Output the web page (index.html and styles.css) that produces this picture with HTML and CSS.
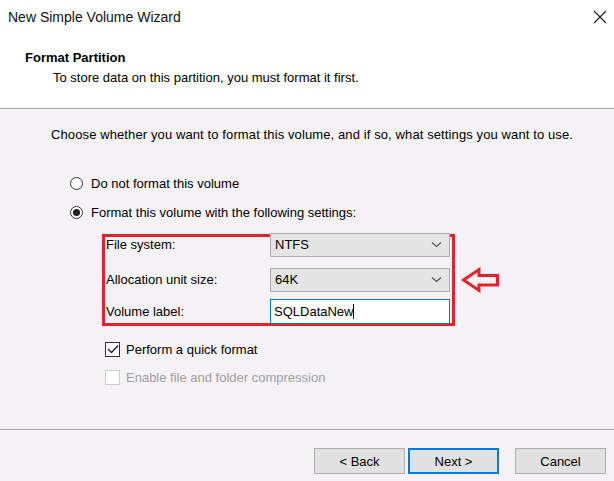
FILE: index.html
```html
<!DOCTYPE html>
<html>
<head>
<meta charset="utf-8">
<link rel="stylesheet" href="styles.css">
</head>
<body>
<div class="dialog">
  <div class="header">
    <div class="titlebar">
      <span class="title">New Simple Volume Wizard</span>
      <svg class="close" width="14" height="14" viewBox="0 0 14 14"><path d="M1 1 L13 13 M13 1 L1 13" stroke="#222" stroke-width="1.2" fill="none"/></svg>
    </div>
    <div class="heading">Format Partition</div>
    <div class="subheading">To store data on this partition, you must format it first.</div>
  </div>
  <div class="content">
    <div class="intro">Choose whether you want to format this volume, and if so, what settings you want to use.</div>
    <div class="radio-row first">
      <span class="radio"></span>
      <span>Do not format this volume</span>
    </div>
    <div class="radio-row">
      <span class="radio checked"><span class="dot"></span></span>
      <span>Format this volume with the following settings:</span>
    </div>
    <div class="settings-wrap">
      <div class="settings">
        <div class="field">
          <span class="label">File system:</span>
          <div class="combo"><span>NTFS</span><svg width="11" height="7" viewBox="0 0 11 7"><path d="M1 1.5 L5.5 5.5 L10 1.5" stroke="#555" stroke-width="1.3" fill="none"/></svg></div>
        </div>
        <div class="field second">
          <span class="label">Allocation unit size:</span>
          <div class="combo"><span>64K</span><svg width="11" height="7" viewBox="0 0 11 7"><path d="M1 1.5 L5.5 5.5 L10 1.5" stroke="#555" stroke-width="1.3" fill="none"/></svg></div>
        </div>
        <div class="field third">
          <span class="label">Volume label:</span>
          <div class="textbox"><span>SQLDataNew</span><span class="caret"></span></div>
        </div>
      </div>
      <svg class="arrow" width="40" height="28" viewBox="0 0 40 28"><path d="M2.5 14 L18 3.5 L18 9.5 L36.5 9.5 L36.5 19 L18 19 L18 24.5 Z" stroke="#e8202a" stroke-width="3" fill="none" stroke-linejoin="miter"/></svg>
    </div>
    <div class="check-row">
      <span class="check"><svg width="12" height="10" viewBox="0 0 12 10"><path d="M1 5 L4.5 8.5 L11 1.5" stroke="#222" stroke-width="1.4" fill="none"/></svg></span>
      <span>Perform a quick format</span>
    </div>
    <div class="check-row disabled">
      <span class="check"></span>
      <span>Enable file and folder compression</span>
    </div>
  </div>
  <div class="footer">
    <button class="btn">&lt; Back</button>
    <button class="btn primary">Next &gt;</button>
    <button class="btn cancel">Cancel</button>
  </div>
</div>
</body>
</html>
```

FILE: styles.css
```css
html, body {
  margin: 0;
  padding: 0;
}
body {
  width: 614px;
  height: 481px;
  overflow: hidden;
  background: #f5f2f5;
  font-family: "Liberation Sans", Arial, sans-serif;
  font-size: 13px;
  color: #000;
}
.dialog {
  display: flex;
  flex-direction: column;
  height: 481px;
}
.header {
  background: #fff;
  height: 109px;
  border-bottom: 1px solid #a8a8a8;
  box-sizing: border-box;
}
.titlebar {
  display: flex;
  justify-content: space-between;
  align-items: center;
  height: 34px;
  padding: 0 7px 0 8px;
}
.title {
  font-size: 14px;
  color: #111;
}
.heading {
  font-weight: bold;
  margin: 16px 0 0 25px;
  line-height: 16px;
}
.subheading {
  margin: 4px 0 0 53px;
  line-height: 16px;
}
.content {
  flex: 1;
  padding: 18px 0 0 51px;
}
.intro {
  line-height: 16px;
  letter-spacing: 0.11px;
}
.radio-row {
  display: flex;
  align-items: center;
  gap: 8px;
  margin-left: 19px;
  height: 16px;
  margin-top: 13px;
}
.radio-row.first {
  margin-top: 32px;
}
.radio {
  width: 11px;
  height: 11px;
  border: 1px solid #333;
  border-radius: 50%;
  background: #fff;
  display: flex;
  align-items: center;
  justify-content: center;
}
.radio .dot {
  width: 7px;
  height: 7px;
  border-radius: 50%;
  background: #222;
}
.settings-wrap {
  display: flex;
  align-items: center;
  margin: 14px 0 0 51px;
  gap: 6px;
}
.settings {
  width: 344px;
  height: 86px;
  border: 3px solid #e8202a;
  padding: 0 2px 0 1px;
}
.field {
  display: flex;
  align-items: center;
  height: 25px;
  margin-top: -5px;
}
.field.second {
  margin-top: 10px;
}
.field.third {
  margin-top: 7px;
}
.label {
  width: 164px;
}
.combo {
  width: 180px;
  height: 24px;
  background: #e5e5e5;
  border: 1px solid #adadad;
  display: flex;
  align-items: center;
  justify-content: space-between;
  padding: 0 7px 0 4px;
  box-sizing: border-box;
}
.textbox {
  width: 180px;
  height: 25px;
  background: #fff;
  border: 1px solid #0078d7;
  display: flex;
  align-items: center;
  padding: 0 3px;
  box-sizing: border-box;
}
.caret {
  width: 1px;
  height: 15px;
  background: #000;
}
.check-row {
  display: flex;
  align-items: center;
  gap: 6px;
  margin: 15px 0 0 54px;
  height: 16px;
}
.check-row.disabled {
  margin-top: 12px;
  color: #a0a0a0;
}
.check {
  width: 13px;
  height: 13px;
  border: 1px solid #333;
  background: #fff;
  display: flex;
  align-items: center;
  justify-content: center;
}
.disabled .check {
  border-color: #cccccc;
}
.footer {
  height: 52px;
  border-top: 1px solid #a0a0a0;
  box-shadow: inset 0 1px 0 #fff;
  display: flex;
  align-items: flex-start;
  padding: 18px 0 0 314px;
  gap: 3px;
  box-sizing: border-box;
}
.btn {
  width: 91px;
  height: 26px;
  background: #e1e1e1;
  border: 1px solid #adadad;
  font-family: "Liberation Sans", Arial, sans-serif;
  font-size: 13px;
  color: #000;
  padding: 0;
}
.btn.primary {
  border: 2px solid #0078d7;
}
.btn.cancel {
  margin-left: 13px;
}
```
